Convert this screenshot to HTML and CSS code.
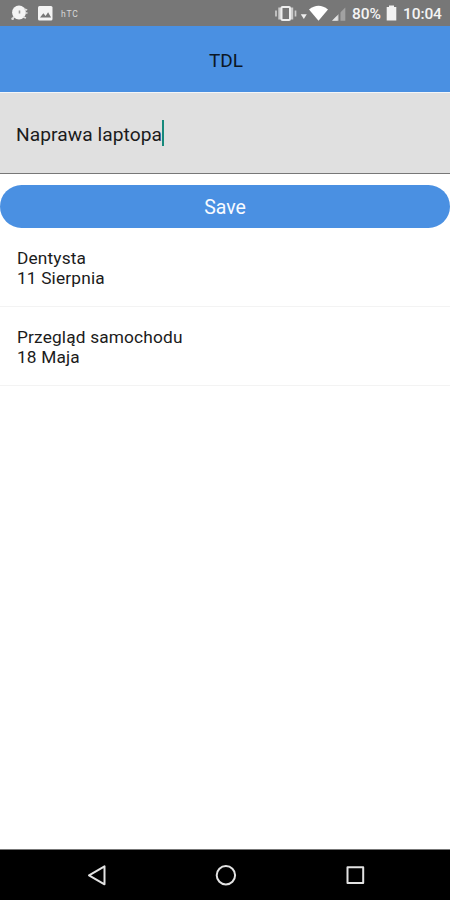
FILE: index.html
```html
<!DOCTYPE html>
<html lang="pl">
<head>
<meta charset="utf-8">
<title>TDL</title>
<link rel="stylesheet" href="styles.css">
</head>
<body>
<div class="screen">
  <div class="status">
    <svg class="status-left" width="56" height="26" viewBox="0 0 56 26">
      <circle cx="19" cy="12.5" r="6.9" fill="#f4f4f4"/>
      <path d="M14 16.5l-1.5 3M24 9l3.2 1M25 13h2.5M23 17l3 1" stroke="#ddd" stroke-width="1.7"/>
      <circle cx="12.5" cy="18.8" r="1.2" fill="#ddd"/>
      <path d="M19.500 10.500v3" stroke="#999" stroke-width="1.6"/>
      <rect x="38" y="6" width="14.5" height="14.5" rx="1.5" fill="#f4f4f4"/>
      <path d="M40 17.5l3.4-4.2 2.2 2.7 2.5-3.8 3 5.3z" fill="#777"/>
    </svg>
    <span class="brand">hTC</span>
    <svg class="status-right" width="76" height="26" viewBox="272 0 76 26">
      <path d="M281 7.500h-2.700v12h2.700M290.500 7.500h2.700v12h-2.700" fill="#ccc"/>
      <rect x="281.5" y="7" width="8.500" height="13" rx="1" fill="#777" stroke="#eee" stroke-width="2"/>
      <path d="M276 10.500v6M295.500 10.500v6" stroke="#ccc" stroke-width="1.7"/>
      <path d="M300.800 14.200h6L303.800 19z" fill="#eee"/>
      <path d="M309 9.500q9.500-7.500 19 0L318.500 20.700z" fill="#fff"/>
      <path d="M345.300 7.500v13.300h-13.300z" fill="#a2a2a2"/>
      <path d="M337.800 15v5.800h-5.800z" fill="#e4e4e4"/>
      <path d="M339.700 10v11" stroke="#777" stroke-width="1.500"/>
    </svg>
    <span class="percent">80%</span>
    <svg class="battery" width="11" height="16" viewBox="0 0 11 16"><path d="M3 0.500h5v1.500h2.300v13.500h-9.600v-13.500H3z" fill="#f2f2f2"/></svg>
    <span class="clock">10:04</span>
  </div>
  <header class="header">TDL</header>
  <div class="field"><span class="value">Naprawa laptopa</span><i class="caret"></i></div>
  <div class="save">Save</div>
  <div class="item"><div class="name">Dentysta</div><div class="date">11 Sierpnia</div></div>
  <div class="item"><div class="name">Przegląd samochodu</div><div class="date">18 Maja</div></div>
  <div class="nav">
    <svg width="450" height="50" viewBox="0 0 450 50" fill="none" stroke="#e2e2e2" stroke-width="2" stroke-linejoin="round">
      <path d="M104.500 16.300v18L89 25.300z"/>
      <circle cx="225.900" cy="25.300" r="9.200"/>
      <rect x="347.500" y="17.300" width="15.700" height="15.800"/>
    </svg>
  </div>
</div>
</body>
</html>
```
FILE: styles.css
```css
* { box-sizing: border-box; }
body { margin: 0; background: #fff; font-family: Roboto, sans-serif; color: #1b1b1b; }
.screen { width: 450px; height: 900px; display: flex; flex-direction: column; overflow: hidden; }
.status { height: 26px; background: #777; color: #f4f4f4; display: flex; align-items: center; flex: none; }
.status svg { display: block; flex: none; }
.brand { width: 22px; margin-left: 5px; font-size: 8.5px; line-height: 26px; padding-top: 1px; letter-spacing: 0.8px; color: #d8d8d8; }
.status-right { margin-left: 189px; }
.percent { width: 34px; padding-left: 4px; font-size: 15.5px; font-weight: 500; line-height: 28px; letter-spacing: -0.1px; margin-top: 2px; }
.battery { margin-left: 4px; }
.clock { margin-left: 6px; margin-top: 2px; font-size: 15.5px; font-weight: 500; line-height: 28px; letter-spacing: -0.1px; }
.header { flex: none; height: 66px; background: #4a90e2; color: #0c1725; font-size: 19px; line-height: 69px; padding-left: 2px; text-align: center; }
.field { flex: none; height: 82px; background: #e0e0e0; border-top: 1px solid #f4f6f8; border-bottom: 1px solid #777; padding-left: 16px; display: flex; align-items: center; font-size: 19.2px; }
.value { width: 146px; white-space: nowrap; padding-top: 2px; letter-spacing: 0.06px; }
.caret { width: 2px; height: 26px; background: #16897b; }
.save { flex: none; height: 43px; margin-top: 11px; background: #4a90e2; border-radius: 22px; color: #f7faff; font-size: 19.5px; line-height: 45px; text-align: center; }
.item { flex: none; height: 79px; border-bottom: 1px solid #f3f3f3; padding: 20px 17px 0; font-size: 17.3px; line-height: 20px; letter-spacing: 0.16px; }
.nav { flex: none; height: 51px; margin-top: auto; background: #000; border-top: 1px solid #777; }
.nav svg { display: block; }
```
